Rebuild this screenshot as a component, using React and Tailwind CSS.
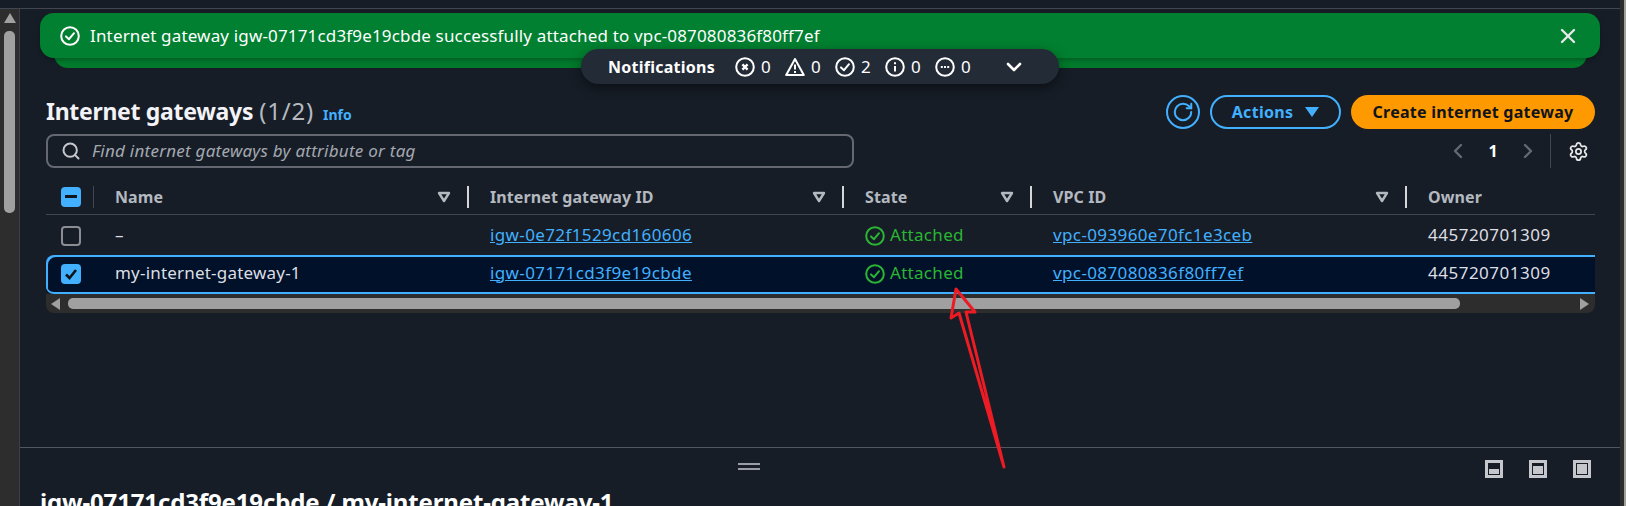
import React from 'react';
import { ChevronDown, ChevronLeft, ChevronRight, RotateCw, Search, Settings, X } from 'lucide-react';

const font = { fontFamily: '"Noto Sans", sans-serif' };

const CircleIcon = ({ className = 'w-5 h-5', children }) => (
  <svg viewBox="0 0 20 20" fill="none" stroke="currentColor" strokeWidth="2" className={className}>
    <circle cx="10" cy="10" r="8.8" />
    {children}
  </svg>
);

const CheckCircle = ({ className }) => (
  <CircleIcon className={className}>
    <path d="M6 10.4l3 2.8 5-6" strokeLinecap="round" strokeLinejoin="round" />
  </CircleIcon>
);

const FilterCaret = () => (
  <svg viewBox="0 0 14 12" className="w-[14px] h-[12px]" fill="none" stroke="#b4b9c0" strokeWidth="2.4">
    <path d="M2 2h10L7 10z" strokeLinejoin="round" />
  </svg>
);

const Checkbox = ({ checked, partial }) => {
  if (checked || partial) {
    return (
      <div className="w-5 h-5 rounded-[4px] bg-[#42b0ff] flex items-center justify-center">
        {partial && <div className="w-3 h-[3px] bg-[#0f141a]" />}
        {checked && (
          <svg viewBox="0 0 20 20" className="w-5 h-5" fill="none" stroke="#0f141a" strokeWidth="2.6">
            <path d="M5 10.5l3.5 3.5L15 6" />
          </svg>
        )}
      </div>
    );
  }
  return <div className="w-5 h-5 rounded-[4px] border-2 border-[#8c8c94]" />;
};

const columns = ['Name', 'Internet gateway ID', 'State', 'VPC ID', 'Owner'];

const rows = [
  { name: '–', igw: 'igw-0e72f1529cd160606', vpc: 'vpc-093960e70fc1e3ceb' },
  { name: 'my-internet-gateway-1', igw: 'igw-07171cd3f9e19cbde', vpc: 'vpc-087080836f80ff7ef', selected: true },
];

const counts = [
  { label: '0', icon: <CircleIcon><path d="M7.4 7.4l5.2 5.2M12.6 7.4l-5.2 5.2" strokeWidth="2.4" /></CircleIcon> },
  {
    label: '0',
    icon: (
      <svg viewBox="0 0 20 20" className="w-5 h-5" fill="none" stroke="currentColor" strokeWidth="2">
        <path d="M10 2L1.2 18h17.6z" strokeLinejoin="round" />
        <path d="M10 7.5v5M10 14v2" />
      </svg>
    ),
  },
  { label: '2', icon: <CheckCircle /> },
  { label: '0', icon: <CircleIcon><path d="M10 9v5.5M10 5.2v2" /></CircleIcon> },
  { label: '0', icon: <CircleIcon><path d="M5.8 10h2M9 10h2M12.2 10h2" /></CircleIcon> },
];

const LayoutIcon = ({ fill }) => (
  <div className="w-[18px] h-[18px] border-[3px] border-[#c6c6cd] bg-[#161d26] flex flex-col justify-end p-px">
    <div className={`bg-[#c6c6cd] ${fill}`} />
  </div>
);

export default function App() {
  return (
    <div style={font} className="relative w-[1626px] h-[506px] overflow-hidden bg-[#161d26] flex text-white">
      <div className="flex-1 min-w-0 flex flex-col">
        <div className="h-[9px] shrink-0 border-b border-[#424650]" />

        <div className="flex flex-1 min-h-0">
          {/* page scrollbar */}
          <div className="w-[20px] shrink-0 bg-[#2d2d2d] border-r border-[#3b3f47] flex flex-col items-center">
            <div className="mt-[4px] w-0 h-0 border-x-[6px] border-x-transparent border-b-[10px] border-b-[#a0a0a0]" />
            <div className="mt-[8px] w-[11px] h-[182px] rounded-[5px] bg-[#a0a0a0] -ml-[1px]" />
          </div>

          <div className="flex-1 min-w-0 flex flex-col">
            <div className="h-[438px] shrink-0 flex flex-col pt-[4px]">
              {/* flash */}
              <div className="relative mx-[20px] h-[55px] shrink-0">
                <div className="absolute left-[14px] right-[13px] top-[10px] h-[45px] rounded-b-[14px] bg-[#017a2c]" />
                <div className="relative h-[45px] rounded-[14px] bg-[#008030] shadow-[0_2px_4px_rgba(0,0,0,0.25)] flex items-center pl-[20px] pr-[20px]">
                  <CheckCircle className="w-5 h-5 shrink-0" />
                  <span className="ml-[10px] text-[17px] tracking-[0.16px] flex-1">
                    Internet gateway igw-07171cd3f9e19cbde successfully attached to vpc-087080836f80ff7ef
                  </span>
                  <X size={24} strokeWidth={2.4} className="text-[#e6e6e6]" />
                </div>
              </div>

              <div className="flex-1 pl-[26px] pr-[25px] pt-[27px]">
                {/* header */}
                <div className="flex items-center justify-between h-[34px]">
                  <div className="flex items-baseline -mt-[2px]">
                    <h1 className="text-[23px] font-bold tracking-[-0.3px] text-[#f3f3f7]">Internet gateways</h1>
                    <span className="ml-[6px] text-[24px] tracking-[0.8px] text-[#b4b9c0]">(1/2)</span>
                    <span className="ml-[9px] text-[14px] font-bold text-[#42b0ff]">Info</span>
                  </div>
                  <div className="flex items-center">
                    <button className="w-[34px] h-[34px] rounded-full border-2 border-[#42b0ff] text-[#42b0ff] flex items-center justify-center">
                      <RotateCw size={22} strokeWidth={2.2} />
                    </button>
                    <button className="ml-[10px] w-[131px] h-[34px] rounded-full border-2 border-[#42b0ff] text-[#42b0ff] font-bold text-[16px] tracking-[0.3px] flex items-center justify-center">
                      Actions
                      <span className="ml-[12px] w-0 h-0 border-x-[7px] border-x-transparent border-t-[10px] border-t-[#42b0ff]" />
                    </button>
                    <button className="ml-[10px] w-[244px] h-[34px] rounded-full bg-[#ff9900] text-[#0f141a] font-bold text-[16px] tracking-[0.25px]">
                      Create internet gateway
                    </button>
                  </div>
                </div>

                {/* search + pagination */}
                <div className="mt-[5px] flex items-center justify-between h-[34px]">
                  <div className="w-[808px] h-[34px] rounded-lg border-2 border-[#656871] flex items-center pl-[13px]">
                    <Search size={20} strokeWidth={2.4} className="text-[#c6c6cd]" />
                    <span className="ml-[11px] text-[17px] tracking-[0.25px] italic text-[#a4a8b0]">Find internet gateways by attribute or tag</span>
                  </div>
                  <div className="flex items-center">
                    <ChevronLeft size={24} strokeWidth={2.4} className="text-[#656871]" />
                    <span className="w-[46px] text-center font-bold text-[16px]">1</span>
                    <ChevronRight size={24} strokeWidth={2.4} className="text-[#656871]" />
                    <div className="ml-[10px] w-px h-[34px] bg-[#424650]" />
                    <Settings size={21} strokeWidth={2} className="ml-[17px] mr-[6px] text-[#e6e6e6]" />
                  </div>
                </div>

                {/* table */}
                <div className="mt-[10px]">
                  <div className="grid grid-cols-[48px_375px_375px_188px_375px_188px] h-[37px] border-b border-[#424650] items-center">
                    <div className="flex items-center pl-[15px] h-[22px] border-r border-[#424650] mt-[1px]">
                      <Checkbox partial />
                    </div>
                    {columns.map((c, i) => (
                      <div key={c} className="flex items-center justify-between pl-[21px] h-[22px] mt-[1px]">
                        <span className="font-bold text-[16px] tracking-[0.1px] text-[#b4b9c0] mt-[1px]">{c}</span>
                        {i < 4 && (
                          <div className="flex items-center">
                            <FilterCaret />
                            <div className="ml-[16px] w-[2px] h-[22px] bg-[#d5d6da]" />
                          </div>
                        )}
                      </div>
                    ))}
                  </div>

                  {rows.map((r) => (
                    <div
                      key={r.igw}
                      className={
                        r.selected
                          ? 'grid grid-cols-[48px_375px_375px_188px_375px_188px] h-[39px] pb-[2px] items-center rounded-l-lg bg-[#001129] shadow-[inset_2px_2px_0_#42b0ff,inset_0_-2px_0_#42b0ff] text-[17px] tracking-[0.2px]'
                          : 'grid grid-cols-[48px_375px_375px_188px_375px_188px] h-[40px] pt-[2px] items-center text-[17px] tracking-[0.2px]'
                      }
                    >
                      <div className="pl-[15px]">
                        <Checkbox checked={r.selected} />
                      </div>
                      <div className="pl-[21px] text-[#dedee3] -mt-[2px]">{r.name}</div>
                      <div className="pl-[21px] text-[#42b0ff] underline tracking-[0.38px] -mt-[2px]">{r.igw}</div>
                      <div className="pl-[21px] flex items-center text-[#2bb534] tracking-[0.3px]">
                        <CheckCircle className="w-5 h-5" />
                        <span className="ml-[5px] -mt-[2px]">Attached</span>
                      </div>
                      <div className="pl-[21px] text-[#42b0ff] underline tracking-[0.38px] -mt-[2px]">{r.vpc}</div>
                      <div className="pl-[21px] text-[#dedee3] tracking-[0.5px] -mt-[2px]">445720701309</div>
                    </div>
                  ))}

                  {/* table horizontal scrollbar */}
                  <div className="h-[19px] bg-[#2d2d2d] rounded-b-lg flex items-center pl-[5px] pr-[6px]">
                    <div className="w-0 h-0 border-y-[6px] border-y-transparent border-r-[9px] border-r-[#a0a0a0]" />
                    <div className="ml-[8px] w-[1392px] h-[11px] rounded-[5px] bg-[#a0a0a0]" />
                    <div className="ml-auto w-0 h-0 border-y-[6px] border-y-transparent border-l-[9px] border-l-[#a0a0a0]" />
                  </div>
                </div>
              </div>
            </div>

            {/* split panel */}
            <div className="relative flex-1 border-t border-[#52565f]">
              <div className="absolute left-[718px] top-[15px] w-[22px] h-[7px] border-y-2 border-[#9a9da5]" />
              <div className="flex justify-end gap-[26px] pr-[29px] pt-[12px]">
                <LayoutIcon fill="h-[5px]" />
                <LayoutIcon fill="h-[8px]" />
                <LayoutIcon fill="h-full" />
              </div>
              <h2 className="mt-[8px] pl-[20px] text-[24px] tracking-[-0.14px] font-bold leading-[32px] whitespace-nowrap">
                igw-07171cd3f9e19cbde / my-internet-gateway-1
              </h2>
            </div>
          </div>
        </div>
      </div>

      {/* right scrollbar */}
      <div className="w-[6px] h-full shrink-0 bg-[#2d2d2d] flex justify-end">
        <div className="w-[2px] h-full bg-[#a0a0a0]" />
      </div>

      {/* notifications bar */}
      <div className="absolute left-[581px] top-[49px] w-[478px] h-[35px] rounded-full bg-[#232b37] shadow-[0_4px_12px_rgba(0,0,0,0.45)] flex items-center pl-[27px]">
        <span className="w-[108px] font-bold text-[16px] tracking-[0.25px] whitespace-nowrap">Notifications</span>
        <div className="ml-[19px] flex items-center gap-[11px]">
          {counts.map((c, i) => (
            <div key={i} className="flex items-center w-[39px] text-[17px]">
              {c.icon}
              <span className="ml-[6px]">{c.label}</span>
            </div>
          ))}
        </div>
        <ChevronDown size={24} strokeWidth={2.6} className="ml-[28px]" />
      </div>

      {/* red annotation arrow */}
      <svg className="absolute left-0 top-0 pointer-events-none" width="1626" height="506" fill="none">
        <path d="M956 289L951 318L959 313L1004 467L966 312L975 312Z" stroke="#ed1c24" strokeWidth="3" strokeLinejoin="round" />
      </svg>
    </div>
  );
}
